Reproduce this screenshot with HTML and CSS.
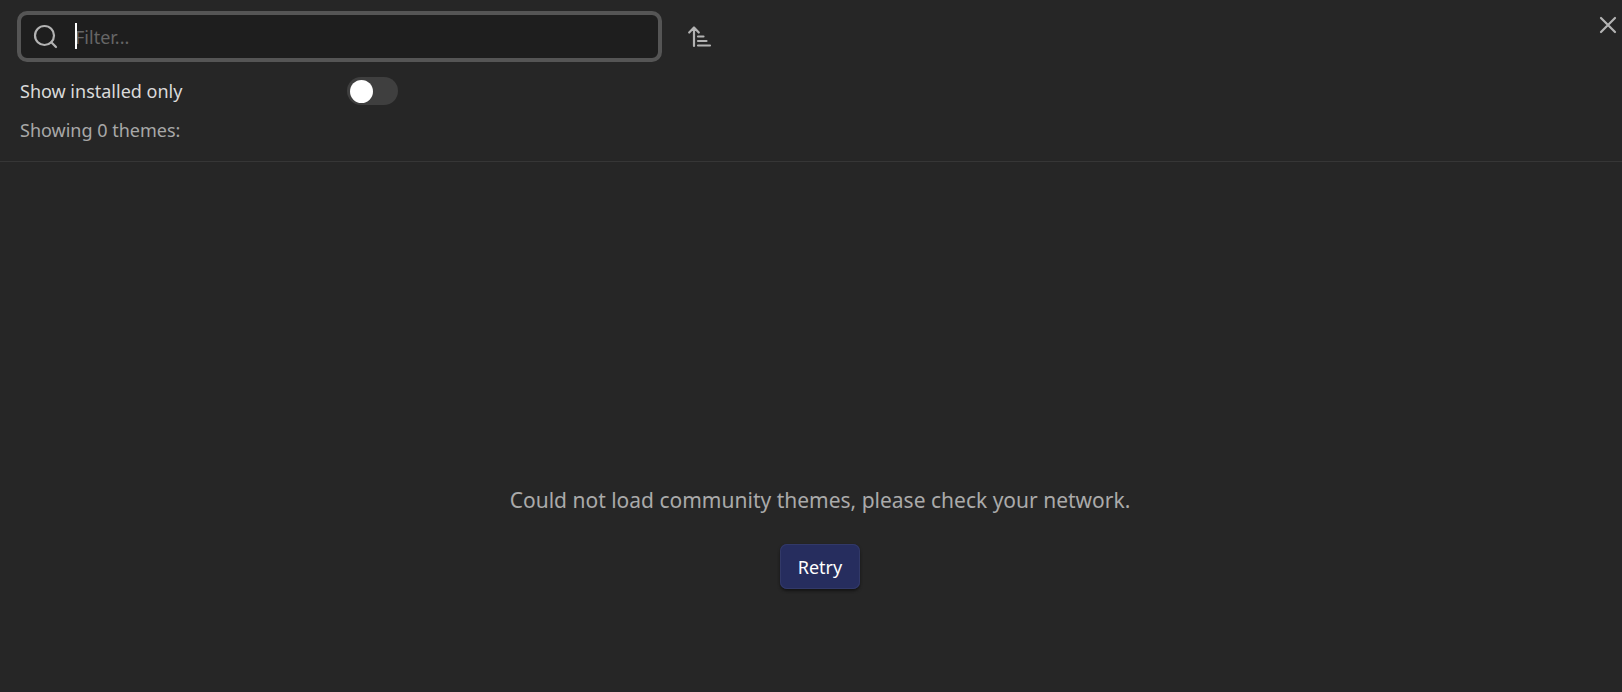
FILE: index.html
```html
<!DOCTYPE html>
<html lang="en">
<head>
<meta charset="utf-8">
<title>Community themes</title>
<link rel="stylesheet" href="styles.css">
</head>
<body>
<main class="modal">
  <button class="close-button" type="button" aria-label="Close">
    <svg width="24" height="24" viewBox="0 0 24 24"><path d="M5 5L19 19M19 5L5 19"/></svg>
  </button>
  <header class="controls">
    <div class="search-row">
      <div class="search-box">
        <svg class="search-icon" width="28" height="28" viewBox="0 0 28 28"><circle cx="13.500" cy="12.500" r="9.500"/><path d="M20.300 19.300L25 24"/></svg>
        <span class="caret"></span>
        <input class="search-input" type="text" placeholder="Filter..." aria-label="Filter themes">
      </div>
      <button class="sort-button" type="button" aria-label="Change sort order">
        <svg width="28" height="28" viewBox="0 0 28 28"><path d="M8 23V4.500M3.200 9.500L8 4.500L12.800 9.500M12 13.500H17.500M12 18H20.500M12 22.500H24"/></svg>
      </button>
    </div>
    <div class="toggle-row">
      <label for="installed-only">Show installed only</label>
      <input class="toggle" type="checkbox" role="switch" id="installed-only">
    </div>
    <p class="summary">Showing 0 themes:</p>
  </header>
  <section class="results">
    <p class="message">Could not load community themes, please check your network.</p>
    <button class="retry-button" type="button">Retry</button>
  </section>
</main>
</body>
</html>
```

FILE: styles.css
```css
* {
  box-sizing: border-box;
}

body {
  margin: 0;
  background: #262626;
  color: #dadada;
  font-family: "Segoe UI", "Noto Sans", "Open Sans", sans-serif;
  font-size: 18px;
  line-height: 26px;
}

p {
  margin: 0;
}

button {
  padding: 0;
  border: 0;
  background: none;
  font: inherit;
}

svg {
  display: block;
  fill: none;
  stroke: #b3b3b3;
  stroke-width: 2.2;
  stroke-linecap: round;
  stroke-linejoin: round;
}

.modal {
  position: relative;
  display: flex;
  flex-direction: column;
  min-height: 100vh;
}

.close-button {
  position: absolute;
  top: 13px;
  right: 2px;
}

.controls {
  padding: 11px 17px 18px;
  border-bottom: 1px solid #363636;
}

.search-row {
  display: flex;
  align-items: center;
  gap: 24px;
}

.search-box {
  position: relative;
  display: flex;
  flex: 0 1 645px;
  align-items: center;
  gap: 16px;
  min-width: 0;
  height: 51px;
  padding-left: 10px;
  border: 4px solid #555;
  border-radius: 10px;
  background: #1e1e1e;
}

.search-icon {
  flex: none;
}

.caret {
  position: absolute;
  top: 8px;
  left: 54px;
  width: 2px;
  height: 26px;
  background: #fff;
}

.search-input {
  flex: 1;
  min-width: 0;
  padding: 0;
  border: 0;
  outline: 0;
  background: none;
  color: #dadada;
  font: inherit;
}

.search-input::placeholder {
  color: #666;
  opacity: 1;
}

.toggle-row {
  display: flex;
  align-items: center;
  gap: 20px;
  margin-top: 15px;
  padding-left: 3px;
}

.toggle-row label {
  width: 307px;
}

.toggle {
  display: flex;
  align-items: center;
  width: 51px;
  height: 28px;
  margin: 0;
  padding: 0 3px;
  border-radius: 14px;
  background: #3f3f3f;
  appearance: none;
}

.toggle::before {
  width: 23px;
  height: 23px;
  border-radius: 50%;
  background: #fff;
  content: "";
}

.toggle:checked {
  justify-content: flex-end;
}

.summary {
  margin-top: 12px;
  padding-left: 3px;
  color: #a8a8a8;
}

.results {
  flex: 1;
  display: flex;
  flex-direction: column;
  align-items: center;
  justify-content: flex-end;
  gap: 28px;
  padding: 0 0 103px 18px;
}

.message {
  color: #aaa;
  font-size: 21px;
  line-height: 32px;
  text-align: center;
}

.retry-button {
  height: 45px;
  padding: 0 18px;
  border-radius: 7px;
  background: #262d5e;
  box-shadow: inset 0 0 0 1px #323968, 0 2px 3px #141414;
  color: #fff;
}
```
